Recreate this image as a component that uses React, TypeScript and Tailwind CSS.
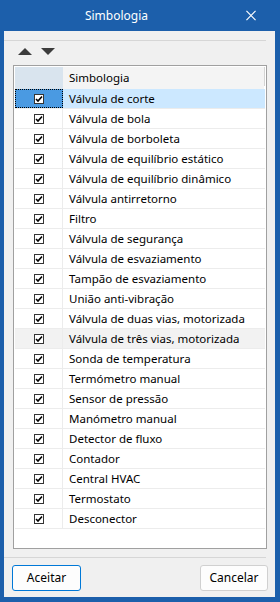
import React from "react";

const items = [
  "Válvula de corte",
  "Válvula de bola",
  "Válvula de borboleta",
  "Válvula de equilíbrio estático",
  "Válvula de equilíbrio dinâmico",
  "Válvula antirretorno",
  "Filtro",
  "Válvula de segurança",
  "Válvula de esvaziamento",
  "Tampão de esvaziamento",
  "União anti-vibração",
  "Válvula de duas vias, motorizada",
  "Válvula de três vias, motorizada",
  "Sonda de temperatura",
  "Termómetro manual",
  "Sensor de pressão",
  "Manómetro manual",
  "Detector de fluxo",
  "Contador",
  "Central HVAC",
  "Termostato",
  "Desconector",
];

function Check() {
  return (
    <div className="w-[10px] h-[10px] border border-[#333333] bg-white flex items-center justify-center">
      <svg width="8" height="8" viewBox="0 0 8 8">
        <path d="M1 4 L3 6 L7 1.5" fill="none" stroke="#000" strokeWidth="1.6" />
      </svg>
    </div>
  );
}

export default function App() {
  const font = { fontFamily: '"Noto Sans", "Liberation Sans", sans-serif' };
  return (
    <div
      className="w-[280px] h-[602px] bg-[#1c5fab] flex flex-col pl-[4px] pr-[5px] pb-[5px]"
      style={font}
    >
      <div className="h-[31px] flex items-center shrink-0">
        <div className="w-[225px] text-center text-white text-[12px]">Simbologia</div>
        <div className="ml-[17px] w-[10px] h-[10px] flex items-center justify-center">
          <svg width="11" height="11" viewBox="0 0 11 11">
            <path d="M0.5 0.5 L10.5 10.5 M10.5 0.5 L0.5 10.5" stroke="#fff" strokeWidth="1.3" />
          </svg>
        </div>
      </div>
      <div className="flex-1 bg-[#f0f0f0] flex flex-col">
        <div className="mt-[9px] h-px w-[262px] bg-[#d6d6d6]" />
        <div className="mt-[7px] h-[8px] flex items-start ml-[14px] gap-[9px]">
          <svg width="14" height="7" viewBox="0 0 14 7">
            <path d="M7 0 L14 7 L0 7 Z" fill="#3c3c3c" />
          </svg>
          <svg width="14" height="7" viewBox="0 0 14 7">
            <path d="M0 0 L14 0 L7 7 Z" fill="#3c3c3c" />
          </svg>
        </div>
        <div className="mt-[9px] ml-[9px] w-[254px] h-[484px] border border-[#a0a0a0] bg-white p-px">
          <div className="h-[22px] flex text-[11.5px] text-black">
            <div className="w-[48px] bg-[#d9e4ee]" />
            <div className="w-[201px] bg-[#f4f4f4] flex items-center pl-[6px]">Simbologia</div>
            <div className="w-px h-[19px] bg-[#d4d4d4]" />
          </div>
          {items.map((t, i) => {
            const sel = i === 0;
            const hover = i === 12;
            return (
              <div
                key={t}
                className={
                  "h-[20px] w-[250px] flex border-b border-[#ececec] text-[11.5px] text-black " +
                  (hover ? "bg-[#f2f2f2]" : "")
                }
              >
                <div
                  className={
                    "w-[48px] flex items-center justify-center border-r " +
                    (sel
                      ? "bg-[#4a9ae2] border border-dotted border-black"
                      : "border-[#ececec]")
                  }
                >
                  <Check />
                </div>
                <div
                  className={
                    "flex-1 flex items-center pl-[6px] " + (sel ? "bg-[#cce8ff]" : "")
                  }
                >
                  {t}
                </div>
              </div>
            );
          })}
        </div>
        <div className="mt-[8px] h-px w-[262px] bg-[#d6d6d6]" />
        <div className="mt-[7px] flex justify-between pl-[8px] pr-[7px]">
          <button className="w-[69px] h-[26px] rounded-[3px] border border-[#0078d7] bg-[#fdfdfd] text-[12px] text-black">
            Aceitar
          </button>
          <button className="w-[68px] h-[26px] rounded-[3px] border border-[#d0d0d0] bg-[#fdfdfd] text-[12px] text-black">
            Cancelar
          </button>
        </div>
      </div>
    </div>
  );
}
